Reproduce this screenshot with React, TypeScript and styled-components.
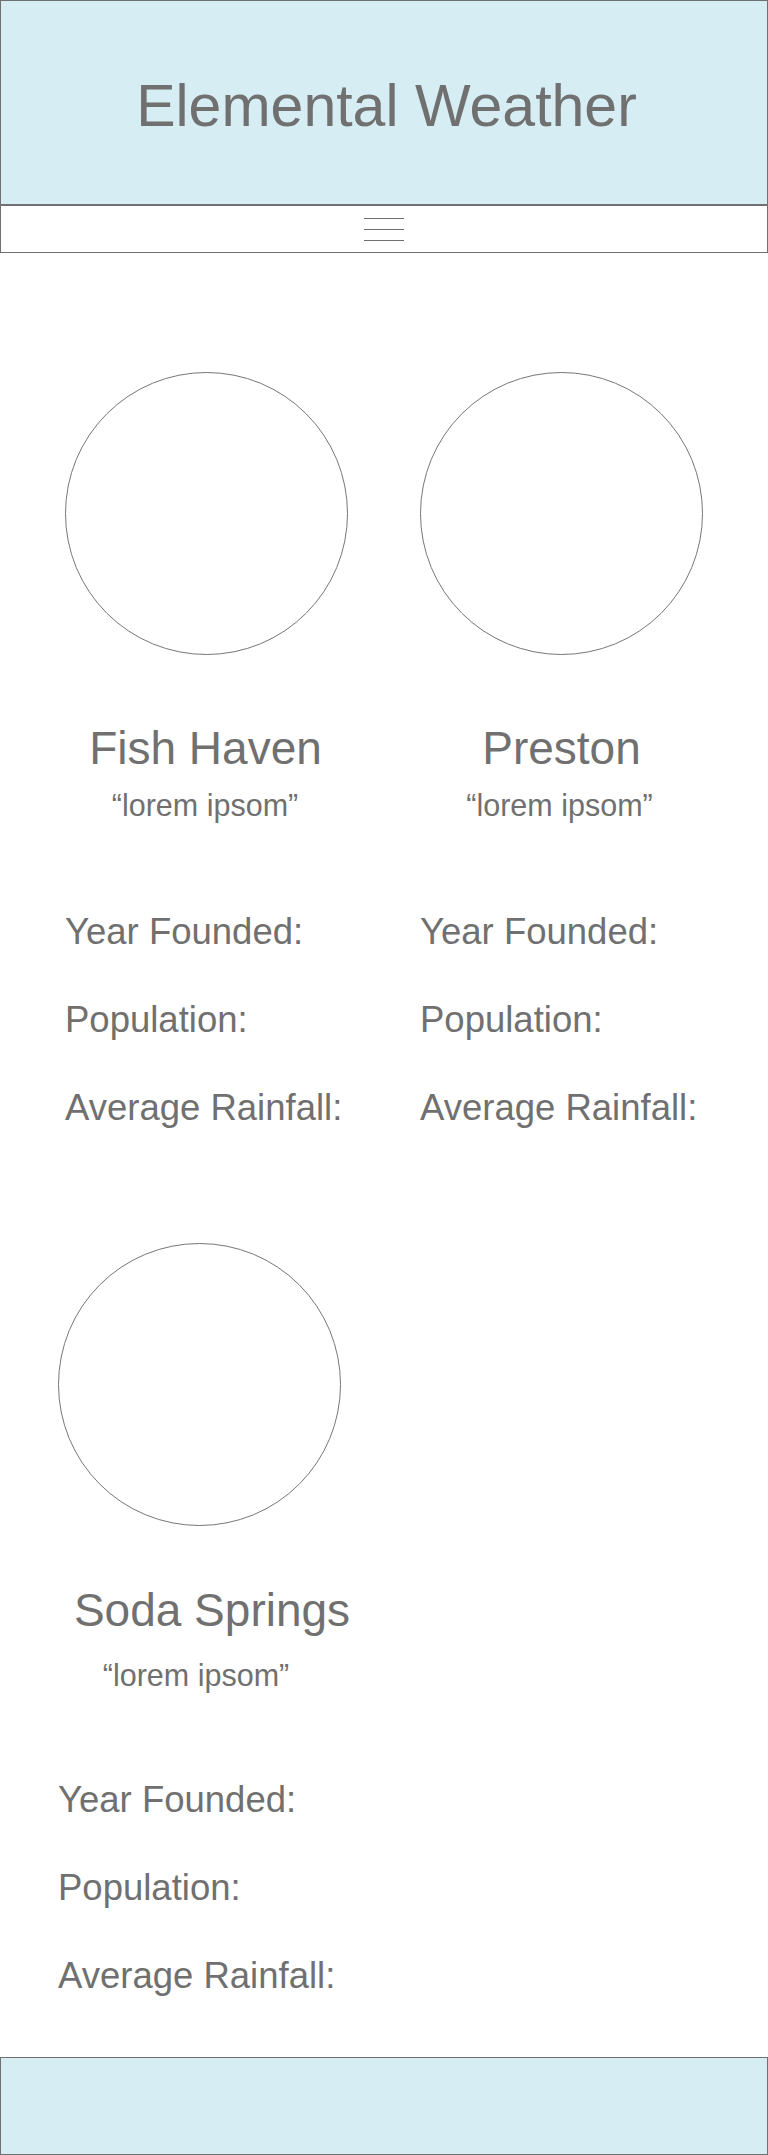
import React from "react";
import styled, { createGlobalStyle } from "styled-components";

const ink = "#707070";
const sky = "#d6eef3";

const GlobalStyle = createGlobalStyle`
  html, body {
    margin: 0;
    padding: 0;
    background: #ffffff;
  }
  body {
    font-family: "Liberation Sans", Arial, Helvetica, sans-serif;
    color: ${ink};
  }
  * { box-sizing: border-box; }
`;

const Page = styled.div`
  width: 768px;
  display: flex;
  flex-direction: column;
`;

const Header = styled.header`
  background: ${sky};
  border: 1px solid ${ink};
  padding: 76px 0 68px 5px;
  display: flex;
  justify-content: center;
`;

const SiteTitle = styled.h1`
  margin: 0;
  font-size: 59px;
  line-height: 59px;
  font-weight: 400;
  color: ${ink};
  white-space: nowrap;
`;

const Nav = styled.nav`
  border: 1px solid ${ink};
  padding: 12px 0 11px;
  display: flex;
  justify-content: center;
`;

const MenuButton = styled.button`
  border: 0;
  padding: 0;
  margin: 0;
  background: transparent;
  display: block;
  width: 40px;
  height: 23px;
  cursor: pointer;
  svg { display: block; }
`;

const Main = styled.main`
  display: grid;
  grid-template-columns: 283px 283px;
  column-gap: 72px;
  row-gap: 117px;
  padding: 119px 0 63px 65px;
`;

const CityCard = styled.article<{ $offset: number }>`
  width: 283px;
  margin-left: ${(p) => p.$offset}px;
  display: flex;
  flex-direction: column;
`;

const Photo = styled.div`
  width: 283px;
  height: 283px;
  border-radius: 50%;
  border: 1px solid #777777;
  background: #ffffff;
`;

const CityName = styled.h2<{ $gap: number; $nudge: number }>`
  margin: ${(p) => p.$gap}px ${(p) => -p.$nudge - 60}px 0 ${(p) => p.$nudge - 60}px;
  font-size: 46px;
  line-height: 46px;
  font-weight: 400;
  text-align: center;
  white-space: nowrap;
  color: ${ink};
`;

const Tagline = styled.p<{ $gap: number; $nudge: number }>`
  margin: ${(p) => p.$gap}px ${(p) => -p.$nudge - 60}px 0 ${(p) => p.$nudge - 60}px;
  font-size: 30.5px;
  line-height: 30px;
  text-align: center;
  white-space: nowrap;
  color: ${ink};
`;

const Facts = styled.ul<{ $gap: number }>`
  list-style: none;
  margin: ${(p) => p.$gap}px 0 0;
  padding: 0;
  display: flex;
  flex-direction: column;
  gap: 52px;
`;

const Fact = styled.li`
  font-size: 36.5px;
  line-height: 36px;
  white-space: nowrap;
  color: ${ink};
`;

const Footer = styled.footer`
  height: 98px;
  background: ${sky};
  border: 1px solid ${ink};
`;

type City = {
  name: string;
  offset: number;
  nameNudge: number;
  tagNudge: number;
  nameGap: number;
  tagGap: number;
  factsGap: number;
};

const cities: City[] = [
  { name: "Fish Haven", offset: 0, nameNudge: -1, tagNudge: -1.5, nameGap: 70, tagGap: 19, factsGap: 94 },
  { name: "Preston", offset: 0, nameNudge: 0, tagNudge: -2, nameGap: 70, tagGap: 19, factsGap: 94 },
  { name: "Soda Springs", offset: -7, nameNudge: 12.5, tagNudge: -3.5, nameGap: 61, tagGap: 27, factsGap: 92 },
];

const MenuIcon = () => (
  <svg width="40" height="23" viewBox="0 0 40 23" aria-hidden="true">
    <g stroke={ink} strokeWidth="1.2" fill="none">
      <line x1="0" y1="0.5" x2="40" y2="0.5" />
      <line x1="0" y1="11.5" x2="40" y2="11.5" />
      <line x1="0" y1="22.5" x2="40" y2="22.5" />
    </g>
  </svg>
);

export default function App() {
  return (
    <>
      <GlobalStyle />
      <Page>
        <Header>
          <SiteTitle>Elemental Weather</SiteTitle>
        </Header>
        <Nav>
          <MenuButton aria-label="Menu">
            <MenuIcon />
          </MenuButton>
        </Nav>
        <Main>
          {cities.map((c) => (
            <CityCard key={c.name} $offset={c.offset}>
              <Photo />
              <CityName $gap={c.nameGap} $nudge={c.nameNudge}>
                {c.name}
              </CityName>
              <Tagline $gap={c.tagGap} $nudge={c.tagNudge}>
                “lorem ipsom”
              </Tagline>
              <Facts $gap={c.factsGap}>
                <Fact>Year Founded:</Fact>
                <Fact>Population:</Fact>
                <Fact>Average Rainfall:</Fact>
              </Facts>
            </CityCard>
          ))}
        </Main>
        <Footer />
      </Page>
    </>
  );
}
